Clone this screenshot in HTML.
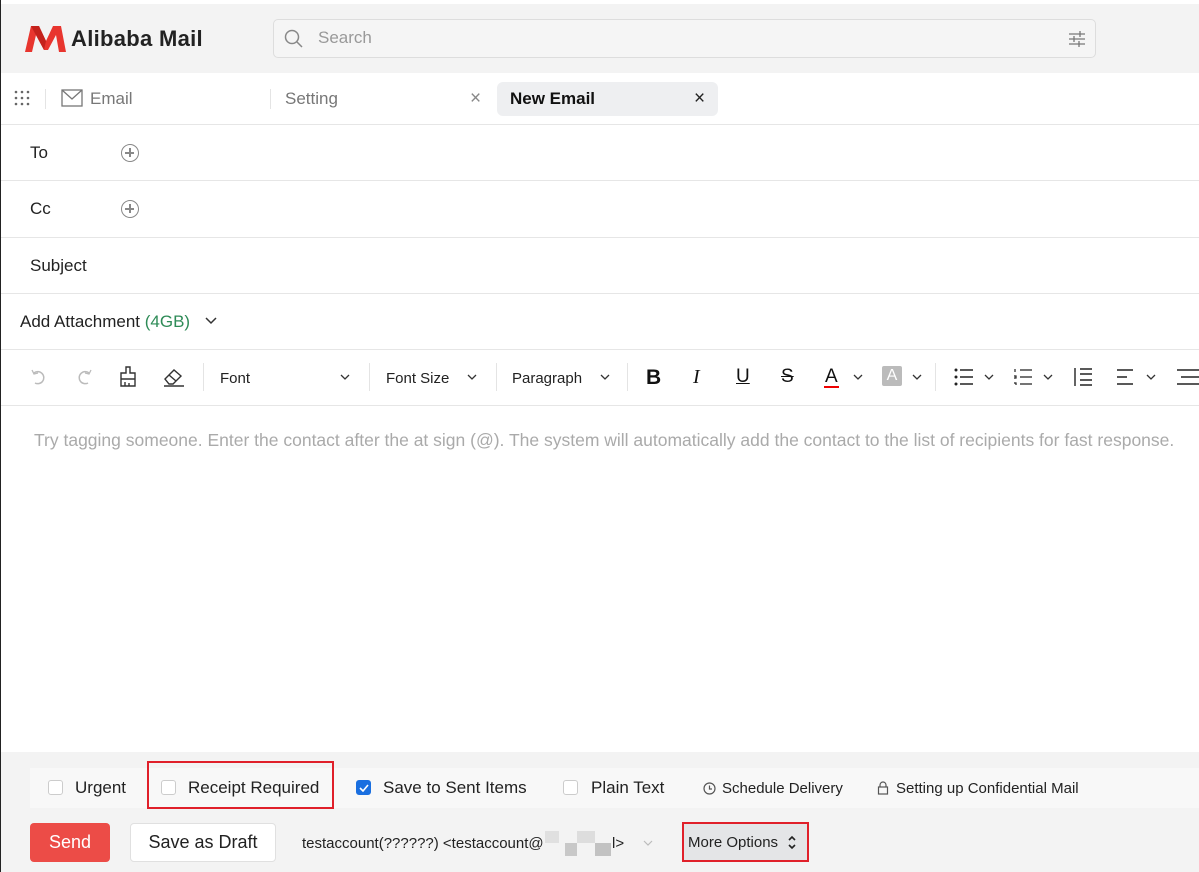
<!DOCTYPE html>
<html><head><meta charset="utf-8"><style>
*{box-sizing:border-box;margin:0;padding:0}
body{width:1199px;height:872px;overflow:hidden;background:#fff;font-family:"Liberation Sans",Arial,sans-serif;color:#222;position:relative}
.abs{position:absolute}
.lbar{position:absolute;left:0;top:0;width:1px;height:872px;background:#222}
.hdr{left:1px;top:4px;width:1198px;height:69px;background:#f3f3f3}
.search{left:273px;top:19px;width:823px;height:39px;border:1px solid #ddd;border-radius:5px;background:#f5f5f5}
.line{position:absolute;left:1px;width:1198px;height:1px;background:#e6e6e6}
.lbl{position:absolute;font-size:17px;color:#222}
.plus{position:absolute;width:18px;height:18px;border:1.5px solid #888;border-radius:50%}
.plus:before{content:"";position:absolute;left:3px;top:7px;width:9px;height:1.5px;background:#888}
.plus:after{content:"";position:absolute;left:7px;top:3px;width:1.5px;height:9px;background:#888}
.tb{position:absolute;top:370px;font-size:15px;color:#222}
.sep{position:absolute;top:363px;width:1px;height:28px;background:#e4e4e4}
.cb{position:absolute;top:780px;width:15px;height:15px;border:1px solid #ccc;border-radius:3px;background:#fff}
.ot{position:absolute;top:778px;font-size:17px;color:#222}
</style></head><body>
<div class="lbar"></div>
<div class="abs hdr"></div>
<svg class="abs" style="left:25px;top:25px" width="42" height="28" viewBox="0 0 42 28"><path d="M0 27 L6 1 L14 1 L21 16 L28 1 L36 1 L41 27 L34 27 L31 10 L23 25 L19 25 L11 10 L7 27Z" fill="#e8352e"/><path d="M6 1 L14 1 L21 16 L19 25Z" fill="#c4221c"/></svg>
<div class="abs" style="left:71px;top:26px;font-size:22px;font-weight:bold;color:#222;letter-spacing:0.3px">Alibaba Mail</div>
<div class="abs search"></div>
<svg class="abs" style="left:284px;top:29px" width="19" height="19"><circle cx="8" cy="8" r="6.5" stroke="#888" stroke-width="1.5" fill="none"/><path d="M13 13 L18 18" stroke="#888" stroke-width="1.5"/></svg>
<div class="abs" style="left:318px;top:28px;font-size:17px;color:#999">Search</div>
<svg class="abs" style="left:1068px;top:30px" width="18" height="17"><path d="M1 4H17M1 9H17M1 14H17" stroke="#777" stroke-width="1.3"/><path d="M12 1V7M6 6V12M11 11V17" stroke="#777" stroke-width="1.3"/></svg>
<svg class="abs" style="left:14px;top:90px" width="18" height="18"><g fill="#666"><circle cx="2" cy="2" r="1.3"/><circle cx="8" cy="2" r="1.3"/><circle cx="14" cy="2" r="1.3"/><circle cx="2" cy="8" r="1.3"/><circle cx="8" cy="8" r="1.3"/><circle cx="14" cy="8" r="1.3"/><circle cx="2" cy="14" r="1.3"/><circle cx="8" cy="14" r="1.3"/><circle cx="14" cy="14" r="1.3"/></g></svg>
<div class="abs" style="left:45px;top:89px;width:1px;height:20px;background:#e4e4e4"></div>
<svg class="abs" style="left:61px;top:89px" width="22" height="18"><rect x="1" y="1" width="20" height="16" fill="none" stroke="#777" stroke-width="1.3"/><path d="M1 1 L11 10 L21 1" fill="none" stroke="#777" stroke-width="1.3"/></svg>
<div class="abs" style="left:90px;top:89px;font-size:17px;color:#777">Email</div>
<div class="abs" style="left:270px;top:89px;width:1px;height:20px;background:#e4e4e4"></div>
<div class="abs" style="left:285px;top:89px;font-size:17px;color:#777">Setting</div>
<div class="abs" style="left:470px;top:88px;font-size:19px;color:#888">×</div>
<div class="abs" style="left:497px;top:82px;width:221px;height:34px;background:#eeeff1;border-radius:6px"></div>
<div class="abs" style="left:510px;top:89px;font-size:17px;font-weight:bold;color:#111">New Email</div>
<div class="abs" style="left:694px;top:88px;font-size:19px;color:#222">×</div>
<div class="line" style="top:124px"></div>
<div class="lbl" style="left:30px;top:143px">To</div><div class="plus" style="left:121px;top:144px"></div>
<div class="line" style="top:180px"></div>
<div class="lbl" style="left:30px;top:199px">Cc</div><div class="plus" style="left:121px;top:200px"></div>
<div class="line" style="top:237px"></div>
<div class="lbl" style="left:30px;top:256px">Subject</div>
<div class="line" style="top:293px"></div>
<div class="lbl" style="left:20px;top:312px">Add Attachment <span style="color:#2e8b57">(4GB)</span></div>
<svg class="abs" style="left:205px;top:317px" width="12" height="8"><path d="M1 1 L6 6 L11 1" fill="none" stroke="#333" stroke-width="1.5"/></svg>
<div class="line" style="top:349px"></div>
<svg class="abs" style="left:30px;top:368px" width="18" height="18"><path d="M4 5 A6 6 0 1 1 5 15" fill="none" stroke="#bbb" stroke-width="1.5"/><path d="M2 2 L4 6 L8 5" fill="none" stroke="#bbb" stroke-width="1.3"/></svg>
<svg class="abs" style="left:75px;top:368px" width="18" height="18"><path d="M14 5 A6 6 0 1 0 13 15" fill="none" stroke="#bbb" stroke-width="1.5"/><path d="M16 2 L14 6 L10 5" fill="none" stroke="#bbb" stroke-width="1.3"/></svg>
<svg class="abs" style="left:118px;top:366px" width="20" height="22"><path d="M8 1 H12 V7 H17 V13 H3 V7 H8Z M3 13 V20 H17 V13 M7 20 V16 M11 20 V17" fill="none" stroke="#333" stroke-width="1.4"/></svg>
<svg class="abs" style="left:162px;top:366px" width="24" height="22"><path d="M3 13 L12 4 L19 10 L11 18 H7 Z M7 9 L14 15" fill="none" stroke="#333" stroke-width="1.4"/><path d="M2 20 H22" stroke="#333" stroke-width="1.4"/></svg>
<div class="sep" style="left:203px"></div>
<div class="tb" style="left:220px">Font</div>
<svg class="abs" style="left:340px;top:374px" width="10" height="7"><path d="M1 1 L5 5 L9 1" fill="none" stroke="#333" stroke-width="1.3"/></svg>
<div class="sep" style="left:369px"></div>
<div class="tb" style="left:386px">Font Size</div>
<svg class="abs" style="left:467px;top:374px" width="10" height="7"><path d="M1 1 L5 5 L9 1" fill="none" stroke="#333" stroke-width="1.3"/></svg>
<div class="sep" style="left:496px"></div>
<div class="tb" style="left:512px">Paragraph</div>
<svg class="abs" style="left:600px;top:374px" width="10" height="7"><path d="M1 1 L5 5 L9 1" fill="none" stroke="#333" stroke-width="1.3"/></svg>
<div class="sep" style="left:627px"></div>
<div class="abs" style="left:646px;top:366px;font-size:21px;font-weight:bold;color:#111">B</div>
<div class="abs" style="left:693px;top:366px;font-size:20px;font-style:italic;font-family:'Liberation Serif',serif;color:#111">I</div>
<div class="abs" style="left:736px;top:366px;font-size:19px;text-decoration:underline;color:#111">U</div>
<div class="abs" style="left:781px;top:366px;font-size:19px;text-decoration:line-through;color:#111">S</div>
<div class="abs" style="left:825px;top:366px;font-size:19px;color:#111">A</div>
<div class="abs" style="left:824px;top:386px;width:15px;height:2px;background:#e00"></div>
<svg class="abs" style="left:853px;top:374px" width="10" height="7"><path d="M1 1 L5 5 L9 1" fill="none" stroke="#333" stroke-width="1.3"/></svg>
<div class="abs" style="left:882px;top:366px;width:20px;height:20px;background:#bbb;border-radius:2px;color:#fff;font-size:16px;text-align:center;line-height:20px">A</div>
<svg class="abs" style="left:912px;top:374px" width="10" height="7"><path d="M1 1 L5 5 L9 1" fill="none" stroke="#333" stroke-width="1.3"/></svg>
<div class="sep" style="left:935px"></div>
<svg class="abs" style="left:954px;top:368px" width="20" height="18"><g fill="#222"><circle cx="2" cy="2" r="1.5"/><circle cx="2" cy="9" r="1.5"/><circle cx="2" cy="16" r="1.5"/></g><path d="M6 2H19M6 9H19M6 16H19" stroke="#222" stroke-width="1.4"/></svg>
<svg class="abs" style="left:984px;top:374px" width="10" height="7"><path d="M1 1 L5 5 L9 1" fill="none" stroke="#333" stroke-width="1.3"/></svg>
<svg class="abs" style="left:1013px;top:368px" width="20" height="18"><path d="M7 2H19M7 9H19M7 16H19M2 1V4M1 8H3V10H1M1 15H3V17" stroke="#222" stroke-width="1.2" fill="none"/></svg>
<svg class="abs" style="left:1043px;top:374px" width="10" height="7"><path d="M1 1 L5 5 L9 1" fill="none" stroke="#333" stroke-width="1.3"/></svg>
<svg class="abs" style="left:1073px;top:367px" width="20" height="20"><path d="M2 1V19M7 2H19M7 7H19M7 13H19M7 18H19" stroke="#222" stroke-width="1.4"/></svg>
<svg class="abs" style="left:1117px;top:368px" width="20" height="18"><path d="M0 2H16M0 9H10M0 16H16" stroke="#222" stroke-width="1.4"/></svg>
<svg class="abs" style="left:1146px;top:374px" width="10" height="7"><path d="M1 1 L5 5 L9 1" fill="none" stroke="#333" stroke-width="1.3"/></svg>
<svg class="abs" style="left:1177px;top:368px" width="22" height="18"><path d="M0 2H22M4 9H22M0 16H22" stroke="#222" stroke-width="1.4"/></svg>
<div class="line" style="top:405px"></div>
<div class="abs" style="left:34px;top:430px;font-size:17.5px;color:#aaa;white-space:nowrap">Try tagging someone. Enter the contact after the at sign (@). The system will automatically add the contact to the list of recipients for fast response.</div>
<div class="abs" style="left:1px;top:752px;width:1198px;height:120px;background:#f3f3f3"></div>
<div class="abs" style="left:30px;top:768px;width:1169px;height:40px;background:#f8f8f8"></div>
<div class="cb" style="left:48px"></div><div class="ot" style="left:75px">Urgent</div>
<div class="abs" style="left:147px;top:761px;width:187px;height:48px;border:2px solid #e0202a"></div>
<div class="cb" style="left:161px"></div><div class="ot" style="left:188px">Receipt Required</div>
<div class="cb" style="left:356px;background:#1a6fe0;border-color:#1a6fe0"></div>
<svg class="abs" style="left:359px;top:784px" width="10" height="8"><path d="M1 4 L4 7 L9 1" fill="none" stroke="#fff" stroke-width="1.6"/></svg>
<div class="ot" style="left:383px">Save to Sent Items</div>
<div class="cb" style="left:563px"></div><div class="ot" style="left:591px">Plain Text</div>
<svg class="abs" style="left:703px;top:782px" width="13" height="13"><circle cx="6.5" cy="6.5" r="5.5" fill="none" stroke="#555" stroke-width="1.2"/><path d="M6.5 3.5V7H9" fill="none" stroke="#555" stroke-width="1.2"/></svg>
<div class="abs" style="left:722px;top:780px;font-size:15px;color:#222">Schedule Delivery</div>
<svg class="abs" style="left:877px;top:781px" width="12" height="14"><path d="M3 6V4A3 3 0 0 1 9 4V6" fill="none" stroke="#555" stroke-width="1.2"/><rect x="1.5" y="6" width="9" height="7" fill="none" stroke="#555" stroke-width="1.2"/></svg>
<div class="abs" style="left:896px;top:780px;font-size:15px;color:#222">Setting up Confidential Mail</div>
<div class="abs" style="left:30px;top:823px;width:80px;height:39px;background:#ec4c47;border-radius:4px;color:#fff;font-size:18px;text-align:center;line-height:39px">Send</div>
<div class="abs" style="left:130px;top:823px;width:146px;height:39px;background:#fff;border:1px solid #e0e0e0;border-radius:4px;font-size:18px;text-align:center;line-height:37px">Save as Draft</div>
<div class="abs" style="left:302px;top:835px;font-size:15px;color:#222">testaccount(??????) &lt;testaccount@</div>
<div class="abs" style="left:545px;top:831px;width:14px;height:12px;background:#e0e0e0"></div>
<div class="abs" style="left:565px;top:843px;width:12px;height:13px;background:#c8c8c8"></div>
<div class="abs" style="left:577px;top:831px;width:18px;height:12px;background:#ddd"></div>
<div class="abs" style="left:595px;top:843px;width:16px;height:13px;background:#c2c2c2"></div>
<div class="abs" style="left:612px;top:835px;font-size:15px;color:#222">l&gt;</div>
<svg class="abs" style="left:643px;top:840px" width="10" height="7"><path d="M1 1 L5 5 L9 1" fill="none" stroke="#bbb" stroke-width="1.2"/></svg>
<div class="abs" style="left:682px;top:822px;width:127px;height:40px;background:#e4e5e7;border:2px solid #e0202a"></div>
<div class="abs" style="left:688px;top:834px;font-size:15px;color:#222">More Options</div>
<svg class="abs" style="left:787px;top:835px" width="10" height="15"><path d="M2 5 L5 2 L8 5 M2 10 L5 13 L8 10" fill="none" stroke="#222" stroke-width="1.6"/></svg>
</body></html>
